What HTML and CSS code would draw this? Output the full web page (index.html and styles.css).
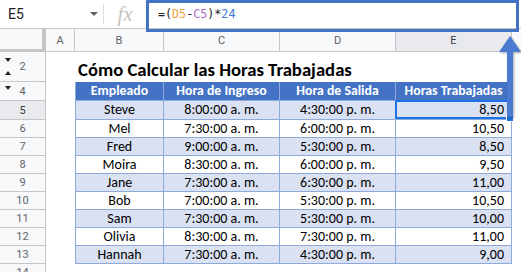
FILE: index.html
```html
<!DOCTYPE html>
<html lang="es">
<head>
<meta charset="utf-8">
<title>Horas Trabajadas</title>
<link rel="stylesheet" href="styles.css">
</head>
<body>
<div class="app">
  <div class="formula-bar">
    <div class="name-box"><span>E5</span><i class="caret"></i></div>
    <div class="sep"></div>
    <div class="fx">fx</div>
    <div class="formula">=(<span class="ref1">D5</span>-<span class="ref2">C5</span>)*<span class="num">24</span></div>
  </div>
  <div class="focus-box"></div>

  <div class="sheet">
    <div class="corner"></div>
    <div class="ch">A</div><div class="ch">B</div><div class="ch">C</div><div class="ch">D</div><div class="ch ch-sel">E</div><div class="ch ch-rest"></div>

    <div class="rh"><i class="tri tri-down tri-top"></i>2<i class="tri tri-up tri-bottom"></i></div>
    <div class="c"></div>
    <div class="title">Cómo Calcular las Horas Trabajadas</div>
    <div class="c"></div>

    <div class="rh"><i class="tri tri-down tri-top4"></i>4</div>
    <div class="c"></div>
    <div class="t th first">Empleado</div><div class="t th">Hora de Ingreso</div><div class="t th">Hora de Salida</div><div class="t th">Horas Trabajadas</div>
    <div class="c"></div>

    <div class="rh rh-sel">5</div><div class="c"></div>
    <div class="t band first">Steve</div><div class="t band">8:00:00 a. m.</div><div class="t band">4:30:00 p. m.</div><div class="t band n sel">8,50</div><div class="c"></div>

    <div class="rh">6</div><div class="c"></div>
    <div class="t first">Mel</div><div class="t">7:30:00 a. m.</div><div class="t">6:00:00 p. m.</div><div class="t n">10,50</div><div class="c"></div>

    <div class="rh">7</div><div class="c"></div>
    <div class="t band first">Fred</div><div class="t band">9:00:00 a. m.</div><div class="t band">5:30:00 p. m.</div><div class="t band n">8,50</div><div class="c"></div>

    <div class="rh">8</div><div class="c"></div>
    <div class="t first">Moira</div><div class="t">8:30:00 a. m.</div><div class="t">6:00:00 p. m.</div><div class="t n">9,50</div><div class="c"></div>

    <div class="rh">9</div><div class="c"></div>
    <div class="t band first">Jane</div><div class="t band">7:30:00 a. m.</div><div class="t band">6:30:00 p. m.</div><div class="t band n">11,00</div><div class="c"></div>

    <div class="rh">10</div><div class="c"></div>
    <div class="t first">Bob</div><div class="t">7:00:00 a. m.</div><div class="t">5:30:00 p. m.</div><div class="t n">10,50</div><div class="c"></div>

    <div class="rh">11</div><div class="c"></div>
    <div class="t band first">Sam</div><div class="t band">7:30:00 a. m.</div><div class="t band">5:30:00 p. m.</div><div class="t band n">10,00</div><div class="c"></div>

    <div class="rh">12</div><div class="c"></div>
    <div class="t first">Olivia</div><div class="t">8:30:00 a. m.</div><div class="t">7:30:00 p. m.</div><div class="t n">11,00</div><div class="c"></div>

    <div class="rh">13</div><div class="c"></div>
    <div class="t band first">Hannah</div><div class="t band">7:30:00 a. m.</div><div class="t band">4:30:00 p. m.</div><div class="t band n">9,00</div><div class="c"></div>

    <div class="rh rh-last">14</div>
  </div>

  <svg class="arrow" width="26" height="92" viewBox="0 0 26 92" aria-hidden="true">
    <polygon points="13,6 2,22 24,22" />
    <rect x="10" y="21" width="6" height="66" />
  </svg>
</div>
</body>
</html>
```
FILE: styles.css
```css
* { box-sizing: border-box; }

html, body {
  margin: 0;
  padding: 0;
  background: #fff;
}

body {
  font-family: Roboto, "Liberation Sans", Arial, sans-serif;
  color: #202124;
}

.app {
  position: relative;
  width: 521px;
  height: 272px;
  overflow: hidden;
}

/* ---------- formula bar ---------- */
.formula-bar {
  display: flex;
  align-items: center;
  height: 29px;
  border-bottom: 1px solid #c4c7c5;
}

.name-box {
  width: 103px;
  display: flex;
  align-items: center;
  justify-content: space-between;
  padding: 0 5px 0 8px;
  font-size: 14px;
  color: #202124;
}

.caret {
  width: 0;
  height: 0;
  border-left: 4px solid transparent;
  border-right: 4px solid transparent;
  border-top: 4px solid #5f6368;
}

.sep {
  width: 1px;
  height: 20px;
  background: #dadce0;
}

.fx {
  width: 42px;
  text-align: center;
  font-family: "Liberation Serif", "DejaVu Serif", serif;
  font-style: italic;
  font-size: 21px;
  color: #c4c4c4;
  line-height: 1;
}

.formula {
  padding-left: 12px;
  font-family: "DejaVu Sans Mono", "Liberation Mono", monospace;
  font-size: 11.7px;
  color: #202124;
}

.ref1 { color: #f4a13f; }
.ref2 { color: #ad6bc6; }
.num { color: #3f7ad9; }

.focus-box {
  position: absolute;
  left: 146px;
  top: 0;
  width: 373px;
  height: 32px;
  border: 3px solid #4472c4;
  pointer-events: none;
}

/* ---------- sheet grid ---------- */
.sheet {
  display: grid;
  grid-template-columns: 46px 29px 89px 116px 116px 116px 1fr;
  grid-template-rows: 23px 30px 19px 19px repeat(8, 18px) 1fr;
  height: 243px;
}

.corner {
  background: #f8f9fa;
  border-right: 4px solid #c4c7c5;
  border-bottom: 3px solid #c4c7c5;
}

.ch {
  background: #f8f9fa;
  border-right: 1px solid #c4c7c5;
  border-bottom: 1px solid #c4c7c5;
  display: flex;
  align-items: center;
  justify-content: center;
  font-size: 11px;
  color: #5f6368;
}

.ch-sel {
  background: #e8eaed;
  color: #3c4043;
}

.ch-rest { border-right: none; }

.rh {
  position: relative;
  background: #f8f9fa;
  border-right: 1px solid #c4c7c5;
  border-bottom: 1px solid #c4c7c5;
  display: flex;
  align-items: center;
  justify-content: center;
  font-size: 11px;
  color: #5f6368;
  grid-column: 1;
}

.rh-sel {
  background: #e8eaed;
  color: #3c4043;
}

.rh-last {
  border-bottom: none;
  align-items: flex-start;
  padding-top: 2px;
}

.tri {
  position: absolute;
  left: 5px;
  width: 0;
  height: 0;
  border-left: 3px solid transparent;
  border-right: 3px solid transparent;
}

.tri-down { border-top: 4px solid #202124; }
.tri-up { border-bottom: 4px solid #202124; }
.tri-top { top: 6px; }
.tri-bottom { top: 19px; }
.tri-top4 { top: 4px; }

.c { background: #fff; }

.title {
  grid-column: 3 / 7;
  align-self: end;
  padding: 0 0 1px 3px;
  font-family: Carlito, Lato, "Open Sans", sans-serif;
  font-weight: 700;
  font-size: 18.7px;
  line-height: 22px;
  color: #000;
  white-space: nowrap;
}

/* ---------- table ---------- */
.t {
  position: relative;
  background: #fff;
  border-right: 1px solid #8eaadb;
  border-bottom: 1px solid #8eaadb;
  font-family: Carlito, Lato, "Open Sans", sans-serif;
  font-size: 14px;
  line-height: 17px;
  color: #000;
  text-align: center;
  white-space: nowrap;
  overflow: visible;
}

.t.first { border-left: 1px solid #8eaadb; }

.t.th {
  background: #4472c4;
  color: #fff;
  font-weight: 700;
  font-size: 13.8px;
  line-height: 18px;
}

.t.band { background: #d9e1f2; }

.t.n {
  text-align: right;
  padding-right: 7px;
}

.t.sel::after {
  content: "";
  position: absolute;
  left: -1px;
  top: -1px;
  right: 0;
  bottom: 0;
  border: 2px solid #1a73e8;
}

.t.sel::before {
  content: "";
  position: absolute;
  right: -3px;
  bottom: -3px;
  width: 6px;
  height: 6px;
  background: #1a73e8;
  border: 1px solid #fff;
  z-index: 2;
}

/* ---------- annotation arrow ---------- */
.arrow {
  position: absolute;
  left: 497px;
  top: 30px;
  fill: #4a7bd0;
  filter: drop-shadow(1px 1px 1px rgba(0, 0, 0, 0.35));
  z-index: 5;
}
```
